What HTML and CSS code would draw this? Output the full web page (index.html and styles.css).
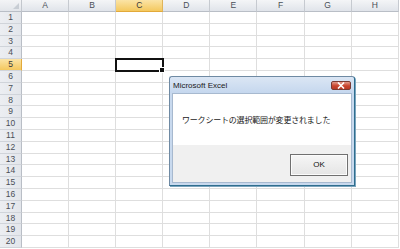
FILE: index.html
```html
<!DOCTYPE html>
<html lang="ja">
<head>
<meta charset="utf-8">
<link rel="stylesheet" href="styles.css">
</head>
<body>
<div class="sheet">
  <div class="corner"><span class="tri"></span></div>
  <div class="ch">A</div><div class="ch">B</div><div class="ch sel">C</div><div class="ch">D</div><div class="ch">E</div><div class="ch">F</div><div class="ch">G</div><div class="ch">H</div>
</div>
<div class="dialog">
  <div class="titlebar">
    <span class="title">Microsoft Excel</span>
    <span class="close"><svg width="8" height="7" viewBox="0 0 8 7"><path d="M1 0.5 L7 6.5 M7 0.5 L1 6.5" stroke="#fff" stroke-width="1.6"/></svg></span>
  </div>
  <div class="frame">
    <div class="msg">ワークシートの選択範囲が変更されました</div>
    <div class="footer"><div class="ok">OK</div></div>
  </div>
</div>
<script src="grid.js"></script>
</body>
</html>
```
FILE: grid.js
```js
(function(){
  var s=document.querySelector('.sheet');
  for(var r=1;r<=20;r++){
    var h=document.createElement('div');
    h.className='rh'+(r===5?' sel':'');
    h.textContent=r;
    s.appendChild(h);
    for(var c=0;c<8;c++){
      var d=document.createElement('div');
      d.className='cell'+(r===5&&c===2?' active':'');
      if(r===5&&c===2){var f=document.createElement('span');f.className='handle';d.appendChild(f);}
      s.appendChild(d);
    }
  }
})();
```
FILE: styles.css
```css
html,body{margin:0;padding:0;background:#fff;overflow:hidden;}
body{width:400px;height:249px;position:relative;font-family:"Liberation Sans",Arial,sans-serif;}
.sheet{display:grid;grid-template-columns:22px repeat(8,47.1px);grid-template-rows:12px repeat(20,11.8px);}
.corner{background:linear-gradient(#f3f4f6,#e2e5ea);border-right:1px solid #c3c7cd;border-bottom:1px solid #b9bec6;box-sizing:border-box;position:relative;}
.tri{position:absolute;right:2px;bottom:2px;width:0;height:0;border-left:6px solid transparent;border-bottom:6px solid #c8cdd4;}
.ch{background:linear-gradient(#f4f5f7,#e0e4ea);border-right:1px solid #c6cad0;border-bottom:1px solid #b9bec6;box-sizing:border-box;font-size:8.5px;color:#4a4f57;text-align:center;line-height:11px;}
.ch.sel{background:linear-gradient(#fbe4a6,#f4c85e);border-bottom:1px solid #e2a93a;border-right:1px solid #e0b45a;color:#3a3a3a;}
.rh{background:linear-gradient(90deg,#eceef2,#e3e6eb);border-right:1px solid #b9bec6;border-bottom:1px solid #d0d4da;box-sizing:border-box;font-size:8.5px;color:#4a4f57;text-align:center;line-height:11px;}
.rh.sel{background:linear-gradient(#fbe4a6,#f4c85e);border-right:1px solid #e2a93a;color:#3a3a3a;}
.cell{border-right:1px solid #dedede;border-bottom:1px solid #dedede;box-sizing:border-box;background:#fff;}
.cell.active{outline:2px solid #111;outline-offset:-1px;position:relative;z-index:1;}
.handle{position:absolute;right:-3px;bottom:-3px;width:4px;height:4px;background:#111;border:1px solid #fff;}
.dialog{position:absolute;left:169px;top:76px;width:186px;height:110px;box-sizing:border-box;border:1px solid #6f8aa3;border-right-color:#2e6e8e;border-bottom-color:#2e6e8e;border-radius:3px 3px 0 0;background:#c8d9ee;display:flex;flex-direction:column;z-index:5;box-shadow:1px 1px 0 #7aa3bd;}
.titlebar{height:16px;display:flex;align-items:center;justify-content:space-between;padding:0 3px 0 3px;background:linear-gradient(#dbe6f4,#c5d7ee);border-radius:3px 3px 0 0;}
.title{font-size:8px;color:#1b1b1b;}
.close{width:20px;height:9px;box-sizing:border-box;background:linear-gradient(#e49a8a,#c9452f 55%,#b93a25);border:1px solid #7b3b33;border-radius:2px;display:flex;align-items:center;justify-content:center;}
.close svg{display:block;}
.frame{flex:1;margin:0 2px 2px 2px;border:1px solid #a7b9cf;display:flex;flex-direction:column;background:#fff;}
.msg{height:51px;font-family:"Noto Sans CJK JP","Noto Sans",sans-serif;font-size:8px;color:#1a1a1a;padding-left:9px;line-height:52px;letter-spacing:-0.2px;background:#fff;}
.footer{flex:1;background:#f0f0f0;display:flex;justify-content:flex-end;align-items:flex-start;padding:9px 3px 0 0;}
.ok{width:58px;height:22px;box-sizing:border-box;border:1px solid #707070;background:linear-gradient(#f6f6f6,#e5e5e5);box-shadow:inset 0 0 0 1px #fcfcfc;font-size:8px;color:#111;text-align:center;line-height:20px;}
```
